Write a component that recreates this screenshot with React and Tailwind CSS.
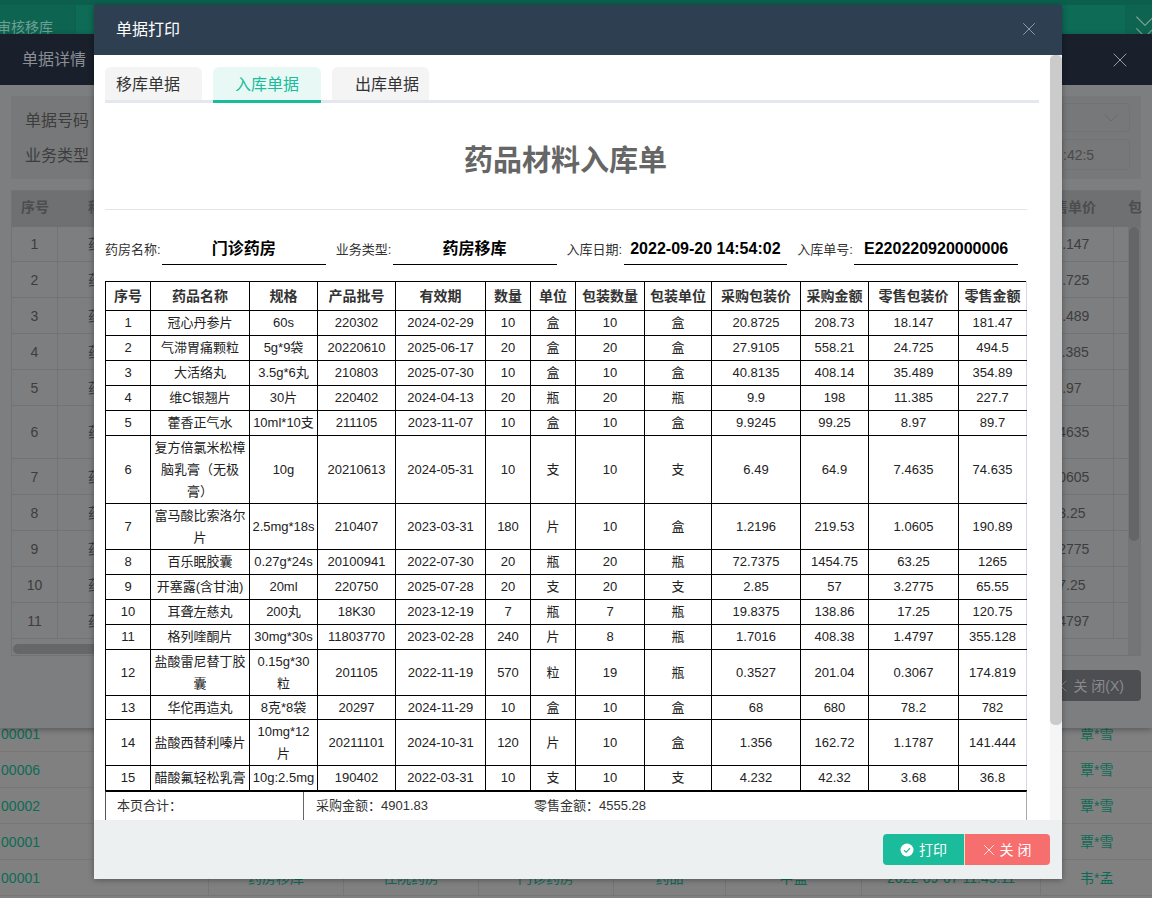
import React from "react";
import { X, ChevronDown, ChevronsDown } from "lucide-react";

const FONT = "font-['Liberation_Sans','Noto_Sans_CJK_SC',sans-serif]";

const rows = [
  [1, "冠心丹参片", "60s", "220302", "2024-02-29", "10", "盒", "10", "盒", "20.8725", "208.73", "18.147", "181.47", 25],
  [2, "气滞胃痛颗粒", "5g*9袋", "20220610", "2025-06-17", "20", "盒", "20", "盒", "27.9105", "558.21", "24.725", "494.5", 25],
  [3, "大活络丸", "3.5g*6丸", "210803", "2025-07-30", "10", "盒", "10", "盒", "40.8135", "408.14", "35.489", "354.89", 25],
  [4, "维C银翘片", "30片", "220402", "2024-04-13", "20", "瓶", "20", "瓶", "9.9", "198", "11.385", "227.7", 25],
  [5, "藿香正气水", "10ml*10支", "211105", "2023-11-07", "10", "盒", "10", "盒", "9.9245", "99.25", "8.97", "89.7", 25],
  [6, "复方倍氯米松樟\n脑乳膏（无极\n膏）", "10g", "20210613", "2024-05-31", "10", "支", "10", "支", "6.49", "64.9", "7.4635", "74.635", 68],
  [7, "富马酸比索洛尔\n片", "2.5mg*18s", "210407", "2023-03-31", "180", "片", "10", "盒", "1.2196", "219.53", "1.0605", "190.89", 46],
  [8, "百乐眠胶囊", "0.27g*24s", "20100941", "2022-07-30", "20", "瓶", "20", "瓶", "72.7375", "1454.75", "63.25", "1265", 25],
  [9, "开塞露(含甘油)", "20ml", "220750", "2025-07-28", "20", "支", "20", "支", "2.85", "57", "3.2775", "65.55", 25],
  [10, "耳聋左慈丸", "200丸", "18K30", "2023-12-19", "7", "瓶", "7", "瓶", "19.8375", "138.86", "17.25", "120.75", 25],
  [11, "格列喹酮片", "30mg*30s", "11803770", "2023-02-28", "240", "片", "8", "瓶", "1.7016", "408.38", "1.4797", "355.128", 25],
  [12, "盐酸雷尼替丁胶\n囊", "0.15g*30\n粒", "201105", "2022-11-19", "570", "粒", "19", "瓶", "0.3527", "201.04", "0.3067", "174.819", 46],
  [13, "华佗再造丸", "8克*8袋", "20297", "2024-11-29", "10", "盒", "10", "盒", "68", "680", "78.2", "782", 24],
  [14, "盐酸西替利嗪片", "10mg*12\n片", "20211101", "2024-10-31", "120", "片", "10", "盒", "1.356", "162.72", "1.1787", "141.444", 46],
  [15, "醋酸氟轻松乳膏", "10g:2.5mg", "190402", "2022-03-31", "10", "支", "10", "支", "4.232", "42.32", "3.68", "36.8", 25],
];

const headers = ["序号", "药品名称", "规格", "产品批号", "有效期", "数量", "单位", "包装数量", "包装单位", "采购包装价", "采购金额", "零售包装价", "零售金额"];
const widths = [45, 99, 68, 78, 90, 45, 45, 69, 67, 89, 68, 90, 68];

const bgRows = [
  ["1", "18.147", 35], ["2", "24.725", 36], ["3", "35.489", 36], ["4", "11.385", 36], ["5", "8.97", 36],
  ["6", "7.4635", 53], ["7", "1.0605", 36], ["8", "63.25", 36], ["9", "3.2775", 36], ["10", "17.25", 36], ["11", "1.4797", 36],
];

const listRows = ["00001", "00006", "00002", "00001", "00001"];

function InfoItem({ label, value }) {
  return (
    <div className="flex w-[221px] items-end">
      <span className="w-[57px] shrink-0 whitespace-nowrap pb-[3px] text-[13px] leading-[24px] text-[#333]">{label}</span>
      <span className="h-[30px] flex-1 whitespace-nowrap border-b border-black text-center text-base font-bold leading-[28px] text-black">{value}</span>
    </div>
  );
}

export default function App() {
  return (
    <div className={`${FONT} relative h-[898px] w-[1152px] overflow-hidden bg-[#808080]`}>
      {/* page behind both dialogs */}
      <div className="flex h-[34px] border-t-[5px] border-[#0c5f4d] bg-[#0e6b56]">
        <div className="flex w-[76px] justify-end overflow-hidden whitespace-nowrap border-r border-[#0d614e] bg-[#0d6450] pr-[22px] text-sm leading-[44px] text-[#6f9f92]">审核移库</div>
        <div className="flex-1" />
        <div className="w-[27px] overflow-hidden bg-[#0d6450] pt-[2px] text-[#7f9f95]">
          <ChevronsDown size={40} strokeWidth={0.7} />
        </div>
      </div>
      <div className="h-[682px]" />
      <div className="text-sm text-[#0d6b55]">
        {listRows.map((code, i) => (
          <div key={i} className="flex h-[36px] items-center border-b border-[#767676]">
            <div className="w-[40px] text-right">{code}</div>
            <div className="flex h-full flex-1 items-center pl-[168px]">
              {i === 4 && (
                <div className="flex h-full items-center">
                  <span className="w-[135px] border-l border-[#767676] text-center leading-[36px]">药房移库</span>
                  <span className="w-[135px] border-l border-[#767676] text-center leading-[36px]">住院药房</span>
                  <span className="w-[135px] border-l border-[#767676] text-center leading-[36px]">门诊药房</span>
                  <span className="w-[112px] border-l border-[#767676] text-center leading-[36px]">药品</span>
                  <span className="w-[136px] border-l border-[#767676] text-center leading-[36px]">中盒</span>
                  <span className="w-[180px] border-x border-[#767676] text-center leading-[36px]">2022-09-07 11:45:11</span>
                </div>
              )}
            </div>
            <div className="w-[72px]">{i === 4 ? "韦*孟" : "覃*雪"}</div>
          </div>
        ))}
      </div>

      {/* 单据详情 dialog */}
      <div className="absolute left-0 top-[34px] flex h-[694px] w-[1152px] flex-col bg-[#7d7e80] shadow-[0_2px_6px_rgba(0,0,0,0.3)]">
        <div className="flex h-[51px] shrink-0 items-center justify-between bg-[#19202b] px-[22px] text-base text-[#8b8f95]">
          <span>单据详情</span>
          <X size={24} strokeWidth={0.9} className="mr-[-2px] text-[#a6a9ad]" />
        </div>
        <div className="flex flex-1 flex-col px-[11px] pt-[11px]">
          <div className="flex h-[83px] shrink-0 justify-between bg-[#777879] pl-[14px] pr-[11px] text-base text-[#3d3d3d]">
            <div className="flex flex-col gap-[11px] pt-[13px] leading-[24px]">
              <span>单据号码</span>
              <span>业务类型</span>
            </div>
            <div className="flex w-[68px] flex-col gap-[7px] pt-[7px] text-sm">
              <div className="flex h-[29px] items-center justify-end rounded-[4px] border border-[#717273] pr-[6px] text-[#666]">
                <ChevronDown size={24} strokeWidth={0.8} />
              </div>
              <div className="flex h-[31px] items-center justify-end rounded-[4px] border border-[#717273] pr-[34px] text-[#4a4a4a]">
                <span className="w-[33px] overflow-hidden whitespace-nowrap">:42:52</span>
              </div>
            </div>
          </div>
          <div className="mt-[11px] flex-none border border-[#727374] text-sm text-[#3d3d3d]">
            <div className="flex h-[36px] items-center bg-[#6f7072] pb-[4px] font-bold text-[#4c4d4e]">
              <div className="w-[46px] text-center">序号</div>
              <div className="w-[30px] pl-[30px]">称</div>
              <div className="flex-1" />
              <div className="w-[90px] text-center">零售单价</div>
              <div className="w-[27px] pl-[15px]">包</div>
            </div>
            <div className="flex">
              <div className="flex-1">
                {bgRows.map(([n, price, h]) => (
                  <div key={n} className="flex items-center border-b border-[#727374]" style={{ height: h }}>
                    <div className="flex h-full w-[46px] items-center justify-center border-r border-[#727374]">{n}</div>
                    <div className="w-[30px] pl-[30px]">药</div>
                    <div className="flex-1" />
                    <div className="w-[90px] text-center">{price}</div>
                    <div className="h-full w-[15px] border-l border-[#727374]" />
                  </div>
                ))}
                <div className="h-[16px] px-[1px] pt-[5px]">
                  <div className="h-[10px] w-[400px] rounded-full bg-[#666768]" />
                </div>
              </div>
              <div className="w-[12px] bg-[#747577] px-[1px]">
                <div className="h-[314px] w-[10px] rounded-full bg-[#656667]" />
              </div>
            </div>
          </div>
          <div className="mt-[14px] flex justify-end">
            <div className="flex h-[31px] w-[91px] items-center justify-end gap-[2px] rounded-[4px] bg-[#4d4e52] pr-[17px] text-sm text-[#8a8b8e]">
              <X size={20} strokeWidth={1} />
              <span>关 闭(X)</span>
            </div>
          </div>
        </div>
      </div>

      {/* 单据打印 dialog */}
      <div className="absolute left-[94px] top-[5px] flex h-[874px] w-[968px] flex-col bg-white shadow-[0_1px_6px_rgba(0,0,0,0.35)]">
        <div className="flex h-[50px] shrink-0 items-center justify-between bg-[#2f3f52] pl-[22px] pr-[22px] text-base text-white">
          <span>单据打印</span>
          <X size={22} strokeWidth={0.9} className="mb-[3px] text-[#a2abb5]" />
        </div>
        <div className="flex min-h-0 flex-1">
          <div className="min-w-0 flex-1 overflow-hidden pl-[11px] pr-[11px] pt-[12px]">
            <div className="flex h-[36px] gap-[11px] border-b-[3px] border-[#e4e7ed] text-base">
              <div className="h-[33px] w-[97px] rounded-t-[6px] bg-[#f4f4f5] pl-[11px] leading-[35px] text-[#333]">移库单据</div>
              <div className="h-[36px] w-[108px] rounded-t-[6px] border-b-[3px] border-[#1abc9c] bg-[#e8f8f5] text-center leading-[35px] text-[#1abc9c]">入库单据</div>
              <div className="h-[33px] w-[97px] rounded-t-[6px] bg-[#f4f4f5] pl-[23px] leading-[35px] text-[#333]">出库单据</div>
            </div>
            <div className="w-[922px]">
              <h1 className="mt-[36px] h-[44px] pl-[1px] pr-[2px] text-center text-[29px] font-bold leading-[44px] text-[#666]">药品材料入库单</h1>
              <div className="mt-[26px] border-t border-[#e5e5e5]" />
              <div className="mt-[25px] flex gap-[10px] pr-[9px]">
                <InfoItem label="药房名称:" value="门诊药房" />
                <InfoItem label="业务类型:" value="药房移库" />
                <InfoItem label="入库日期:" value="2022-09-20 14:54:02" />
                <InfoItem label="入库单号:" value="E220220920000006" />
              </div>
              <table className="mt-[16px] w-[922px] table-fixed border-collapse text-center text-[13px] leading-[22px] text-[#222]">
                <colgroup>
                  {widths.map((w, i) => (
                    <col key={i} style={{ width: w }} />
                  ))}
                </colgroup>
                <thead>
                  <tr className="h-[29px]">
                    {headers.map((h, i) => (
                      <th key={i} className={`border border-black p-0 text-sm font-bold text-[#333] ${i === 12 ? "border-r-[#d5d8e5]" : ""}`}>{h}</th>
                    ))}
                  </tr>
                </thead>
                <tbody>
                  {rows.map((r) => (
                    <tr key={r[0]} style={{ height: r[13] }}>
                      {r.slice(0, 13).map((c, i) => (
                        <td key={i} className={`whitespace-pre-line border border-black p-0 ${i === 12 ? "border-r-[#d5d8e5]" : ""}`}>{c}</td>
                      ))}
                    </tr>
                  ))}
                </tbody>
              </table>
              <div className="flex h-[32px] border-x border-t border-[#555] border-r-[#aaa] border-t-black text-[13px] leading-[28px] text-[#333]">
                <div className="w-[198px] border-r border-[#666] pl-[11px]">本页合计：</div>
                <div className="w-[218px] pl-[12px]">采购金额：4901.83</div>
                <div className="pl-[12px]">零售金额：4555.28</div>
              </div>
            </div>
          </div>
          <div className="w-[12px] shrink-0 bg-[#f5f5f5]">
            <div className="h-[670px] rounded-[5px] bg-[#cbcbcb]" />
          </div>
        </div>
        <div className="flex h-[59px] shrink-0 items-start justify-end bg-[#ecf0f1] pr-[12px] pt-[14px] text-sm text-white">
          <div className="flex h-[31px] w-[82px] items-center justify-center gap-[5px] rounded-l-[4px] border-r border-[#f3d9c9] bg-[#1abc9c]">
            <svg width="14" height="14" viewBox="0 0 14 14">
              <circle cx="7" cy="7" r="6.5" fill="#fff" />
              <path d="M4 7.2 L6.2 9.2 L10 5.2" fill="none" stroke="#1abc9c" strokeWidth="1.2" />
            </svg>
            <span>打印</span>
          </div>
          <div className="flex h-[31px] w-[85px] items-center justify-center gap-[2px] rounded-r-[4px] bg-[#f76e6f] pr-[4px]">
            <X size={18} strokeWidth={1.1} />
            <span>关 闭</span>
          </div>
        </div>
      </div>
    </div>
  );
}
